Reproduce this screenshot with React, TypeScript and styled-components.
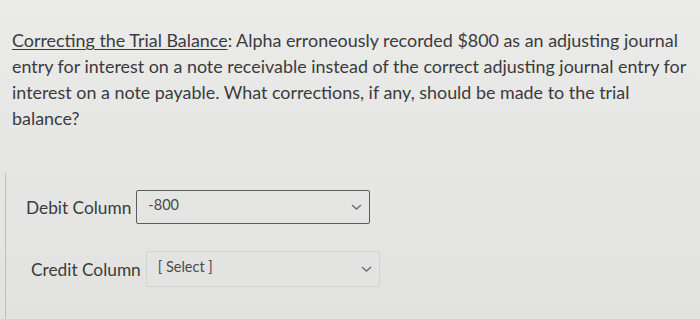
import React from 'react';
import styled, { createGlobalStyle } from 'styled-components';

const GlobalStyle = createGlobalStyle`
    html, body {
        margin: 0;
        padding: 0;
        width: 700px;
        height: 319px;
        overflow: hidden;
        background: #e4e4e2;
    }
`;

const Page = styled.div`
    width: 700px;
    height: 319px;
    box-sizing: border-box;
    padding: 27px 0 0 12px;
    overflow: hidden;
    font-family: Lato, "Liberation Sans", sans-serif;
    color: #3b3b3d;
    background: linear-gradient(180deg, #ebebea 0%, #e6e6e4 50%, #e2e2e0 100%);
`;

const Question = styled.p`
    margin: 0;
    width: 684px;
    font-size: 17.9px;
    line-height: 26px;
`;

const Title = styled.span`
    text-decoration: underline;
    text-underline-offset: 2px;
    text-decoration-thickness: 1px;
`;

const Answers = styled.div`
    margin-top: 42px;
    margin-left: -7px;
    padding: 17px 0 0 20px;
    border-left: 1px solid #bdbdbb;
    display: flex;
    flex-direction: column;
    gap: 27px;
    box-sizing: border-box;
    height: 146px;
`;

const Row = styled.div<{ $indent: number }>`
    display: flex;
    align-items: center;
    padding-left: ${(p) => p.$indent}px;
`;

const Label = styled.span`
    font-size: 17.3px;
    margin-right: 5px;
`;

const Select = styled.div<{ $active: boolean }>`
    width: 234px;
    height: ${(p) => (p.$active ? 34 : 36)}px;
    box-sizing: border-box;
    border: 1px solid ${(p) => (p.$active ? '#5c5c5e' : '#d2d2d0')};
    border-radius: 2px;
    display: flex;
    align-items: center;
    justify-content: space-between;
    padding: 0 7px 0 11px;
    font-size: 14.5px;
    color: #4a4a4c;
`;

const Value = styled.span`
    margin-top: -6px;
`;

const Chevron = () => (
    <svg width="11" height="8" viewBox="0 0 11 8">
        <path d="M1 2 L5.5 6 L10 2" fill="none" stroke="#6b6b8a" strokeWidth="1.5" />
    </svg>
);

const App: React.FC = () => {
    return (
        <Page>
            <GlobalStyle />
            <Question>
                <Title>Correcting the Trial Balance</Title>: Alpha erroneously recorded $800 as an adjusting journal
                entry for interest on a note receivable instead of the correct adjusting journal entry for interest
                on a note payable. What corrections, if any, should be made to the trial balance?
            </Question>
            <Answers>
                <Row $indent={0}>
                    <Label>Debit Column</Label>
                    <Select $active={true}>
                        <Value>-800</Value>
                        <Chevron />
                    </Select>
                </Row>
                <Row $indent={5}>
                    <Label>Credit Column</Label>
                    <Select $active={false}>
                        <Value>[ Select ]</Value>
                        <Chevron />
                    </Select>
                </Row>
            </Answers>
        </Page>
    );
};

export default App;
